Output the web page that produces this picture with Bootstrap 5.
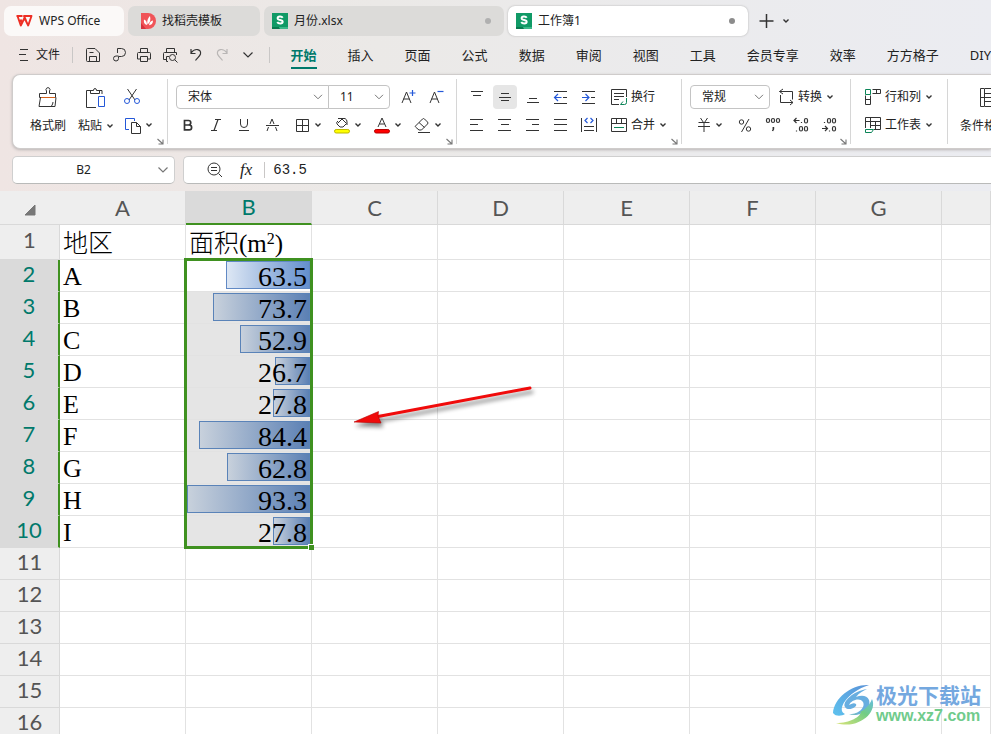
<!DOCTYPE html>
<html lang="zh-CN">
<head>
<meta charset="utf-8">
<meta name="viewport" content="width=device-width, initial-scale=1">
<title>工作簿1 - WPS Office</title>
<link rel="stylesheet" href="https://cdn.jsdelivr.net/npm/bootstrap@5.3.0/dist/css/bootstrap.min.css">
<style>
:root{--ui:"Noto Sans","Noto Sans CJK SC",sans-serif;--sel:#3f9120;--teal:#00796b}
body{font:12px/16px var(--ui);color:#222;background:linear-gradient(90deg,#efe5e3 0,#ebe9e7 38%,#ebebed 70%,#ebecf1 100%)}
button,select,input{font:inherit;color:inherit}
svg{flex:none;fill:none;stroke:#333;stroke-width:1;overflow:visible}
.doc-tabs{padding:6px 4px 0;gap:4px}
.doc-tab{height:30px;border:0;border-radius:7px;background:#dcdbd9;padding:0 12px;gap:8px;font-size:12px;white-space:nowrap}
.doc-tab .dot{width:6px;height:6px;border-radius:50%;background:#b0b0b0}
.tab-home{width:120px;background:#fbf9f8;gap:6px}
.tab-find{width:132px;gap:6px}
.tab-file{width:240px;padding:0 13px 0 8px;gap:6px}
.tab-on{background:#fff;box-shadow:0 0 2px #aaa}
.tab-on .dot{background:#8c8c8c}
.plain{border:0;background:none;padding:0;display:flex;align-items:center;justify-content:center;white-space:nowrap}
.menu-row{height:38px;padding-left:18px}
.qa{width:26px;height:28px}
.rule{width:1px;height:16px;background:#c9c7c6}
.rule-file{margin:0 7px 0 12px}
.menu-tabs{gap:31px;padding-left:21px}
.menu-tabs a{font-size:13px;line-height:18px;color:#222;text-decoration:none;white-space:nowrap;border-bottom:2px solid transparent;padding:4px 0 3px}
.menu-tabs a.on{color:var(--teal);font-weight:700;border-color:var(--teal)}
.ribbon{height:75px;margin-left:12px;background:#fff;border:1px solid #cfcccb;border-right:0;border-radius:8px 0 0 8px;box-shadow:0 1px 3px #b9b4b3;padding:4px 0}
.grp{position:relative;border-right:1px solid #d6d6d6;padding:4px 0 0;flex:none}
.g1{width:155px;padding-left:17px}.g2{width:289px}.g3{width:225px;padding-left:6px}.g4{width:169px}.g5{width:97px;padding-left:14px}.g6{padding-left:12px;border:0}
.g2 .marks{padding-left:6px}
.g2 .sq+.split{margin-left:2px}
.line{height:28px}
.sq{width:28px;height:28px}
.sq.on>span{background:#e6e6e6;border-radius:4px;width:24px;height:24px;display:grid;place-items:center}
.split{width:40px;height:28px;gap:4px}
.lab{height:28px;gap:4px;justify-content:flex-start}
.big{flex-direction:column;height:56px;justify-content:space-between;padding:4px 0 3px}
.big .cap{height:20px;display:flex;align-items:center;gap:4px}
.launch{position:absolute;right:3px;bottom:-1px;width:7px;height:7px}
.pick{appearance:none;height:24px;border:1px solid #c4c4c4;border-radius:4px;padding:0 20px 0 11px;font-size:12px;line-height:16px;background:#fff url("data:image/svg+xml,%3Csvg xmlns='http://www.w3.org/2000/svg' viewBox='0 0 10 6'%3E%3Cpath d='M1 .8 5 4.800 9 .8' fill='none' stroke='%23777'/%3E%3C/svg%3E") no-repeat right 5px center/10px 6px}
.p-font{width:153px;border-radius:4px 0 0 4px;margin-left:8px}
.p-size{width:62px;border-radius:0 4px 4px 0;margin-left:-1px}
.p-num{width:80px;margin-left:8px}
.formula{padding:7px 0 7px 12px;gap:8px}
.fbox{height:28px;background:#fff;border:1px solid #cfcfcf;border-bottom-color:#b9bab9;border-radius:5px}
.name-box{width:163px;padding:0 6px 0 0}
.name-box input{width:100%;min-width:0;border:0;text-align:center;padding:0 4px 0 0;outline:0;background:none}
.name-box svg{stroke:#777}
.edit-box{border-right:0;border-radius:5px 0 0 5px;padding-left:22px}
.edit-box input{border:0;outline:0;font:14px/20px "Liberation Mono",monospace;padding:0;margin-left:8px}
.edit-box .rule{margin-left:12px}
.fx{font:italic 17px/20px "Liberation Serif",serif}
.sheet{position:relative;background:#fff}
.cells{table-layout:fixed;width:100%;border-collapse:separate;border-spacing:0}
.cells th,.cells td{padding:0;border:0 solid #e2e2e2;border-width:0 1px 1px 0;height:32px;line-height:1;overflow:hidden}
.cells th{background:#eee;font:22px/24px Lato,sans-serif;color:#555;text-align:center;border-color:#d9d9d9}
.cells thead th{height:34px}
.cells thead th.on{background:#dadada;color:var(--teal);border-bottom:2px solid var(--sel)}
.cells .first>*{height:35px}
.cells tbody th{vertical-align:middle;padding-bottom:4px}
.cells tr.on th{background:#dadada;color:var(--teal);border-right:2px solid var(--sel);border-bottom-color:#dadada}
.cells td{font:28px/31px "Liberation Serif","Noto Sans CJK SC",serif;color:#000;padding-left:3px}
.cells .first td{font-size:25px;line-height:30px;font-weight:300;padding-top:4px}
.cells .first sup{font-size:16px;line-height:0}
.cells td.val{padding:0;background:#e5e5e5}
.cells td.val.act{background:#fff;position:relative;overflow:visible}
.stackd{display:grid;padding:0 1px;height:31px}
.stackd>*{grid-area:1/1}
.bar{justify-self:end;height:28px;margin-top:1px;border:1px solid #5a83b8;background:linear-gradient(90deg,#c8d1dc,#5b80b4)}
.act .bar{border-color:#6189c4;background:linear-gradient(90deg,#dde7f4,#648fcd)}
.num{justify-self:end;padding-right:3px;padding-top:1px}
.cells td.txt{font-size:26px;line-height:29px;padding-top:2px}
.marquee{position:absolute;left:-2px;top:-2px;width:129px;height:291px;border:3px solid var(--sel);pointer-events:none}
.marquee i{position:absolute;right:-4px;bottom:-4px;background:var(--sel);border:solid #fff;border-width:1px 0 0 1px;box-sizing:content-box;width:5px;height:5px}
.arrow{position:absolute;left:350px;top:189px;filter:drop-shadow(2px 4px 2px #0007)}
.mark-site{position:absolute;right:10px;bottom:6px;color:#74a8df}
.mark-site b{display:block;font:700 21px/24px "Noto Sans CJK SC",sans-serif}
.mark-site em{display:block;font:700 16px/20px "Liberation Sans",sans-serif;color:#70cb8c}
</style>
<script src="https://cdn.jsdelivr.net/npm/bootstrap@5.3.0/dist/js/bootstrap.bundle.min.js"></script>
</head>
<body class="vh-100 overflow-hidden d-flex flex-column">
<svg width="0" height="0" class="position-absolute" aria-hidden="true">
<symbol id="caret" viewBox="0 0 8 6"><path d="M1.500 1.500 4 4l2.500-2.500" stroke-width="1.400"/></symbol>
<symbol id="chev" viewBox="0 0 10 6"><path d="M.5.5 5 5 9.500.5" stroke-width="1.200"/></symbol>
<symbol id="corner" viewBox="0 0 7 7"><path d="M.5 1 6 6M6 1.500V6H1.500" stroke="#777" stroke-width="1.100"/></symbol>
<symbol id="ess" viewBox="0 0 16 16"><path d="M0 0h16v16H0z" fill="#109a66" stroke="none"/><path d="M0 14h7l1 2H0z" fill="#087a4e" stroke="none"/><path d="M7 14h9v2H8z" fill="#3cb889" stroke="none"/><path d="M10.700 4.700C9.800 3 5.600 3 5.600 5.200c0 2.500 5.100 1 5.100 3.500 0 2.400-4.500 2.200-5.400.3" stroke="#fff" stroke-width="1.900"/></symbol>
</svg>

<header>
<div class="doc-tabs d-flex">
<button class="doc-tab tab-home d-flex align-items-center"><svg width="17" height="12" viewBox="0 0 17 12"><path d="M.5 1h6M1.500 1l3.300 9.500L8.500 3l3.700 7.500L15.500 1H8l2.200 5M4.500 4.500 5.700 7" stroke="#ed2e24" stroke-width="1.900" stroke-linejoin="round"/></svg>WPS Office</button>
<button class="doc-tab tab-find d-flex align-items-center"><svg width="16" height="16" viewBox="0 0 16 16"><path d="M1 0h7a8 8 0 0 1 0 16H1z" fill="#f05458" stroke="none"/><path d="M1 10 6 16H1z" fill="#d6323c" stroke="none"/><path d="M7 12C3 11 4 7 4 6.500 6 7 7 9 7 12Zm.500-.5C6.500 7 9 4 10 3c1 4 0 7-2.500 8.500Zm1.500.7C9.500 9 11 8 13 7.500c0 3-1.500 4.500-4 4.700Z" fill="#fff" stroke="none"/></svg>找稻壳模板</button>
<button class="doc-tab tab-file d-flex align-items-center"><svg width="16" height="16"><use href="#ess"/></svg>月份.xlsx<span class="dot ms-auto"></span></button>
<button class="doc-tab tab-file tab-on d-flex align-items-center"><svg width="16" height="16"><use href="#ess"/></svg>工作簿1<span class="dot ms-auto"></span></button>
<button class="plain ms-2" aria-label="新建"><svg width="14" height="14"><path d="M6.500 0v14M-.5 7h14" stroke-width="1.500"/></svg></button>
<button class="plain ms-1" aria-label="更多"><svg width="8" height="6"><use href="#caret"/></svg></button>
</div>
<nav class="menu-row d-flex align-items-center">
<button class="plain"><svg width="10" height="12" class="me-2"><path d="M2 .5h8M1 5.500h7M2 11.500h8"/></svg>文件</button>
<span class="rule rule-file"></span>
<button class="plain qa" aria-label="保存"><svg width="16" height="16"><path d="M1.500 2.500q0-1 1-1h7.500l4.500 4.500v8.500h-12q-1 0-1-1zM4.500 14V9.500h7V14M4.500 5.500h4"/></svg></button>
<button class="plain qa" aria-label="输出"><svg width="16" height="16"><path d="M6.500 6V1.500h4a4 4 0 0 1 0 8h-3v2a2.500 2.500 0 1 1-2.500-2.500h2.500"/></svg></button>
<button class="plain qa" aria-label="打印"><svg width="16" height="16"><path d="M4.500 5V1.500h7V5M4.500 12h-3V6.500q0-1 1-1h11q1 0 1 1V12h-3M4.500 9.500h7v5h-7z"/></svg></button>
<button class="plain qa" aria-label="打印预览"><svg width="16" height="16"><path d="M4.500 5V1.500h8V5M4 12.500H1.500v-6q0-1 1-1h12V8M6 14.500H4.500v-5H7"/><circle cx="10.500" cy="10.500" r="3"/><path d="m12.700 12.700 2.800 2.800"/></svg></button>
<button class="plain qa" aria-label="撤销"><svg width="16" height="16"><path d="M3 2v4.500h4.500M3 6C7 .5 13.500 2 12.500 7c-.500 2-3 4-5 6.500" stroke-width="1.200"/></svg></button>
<button class="plain qa" aria-label="重做"><svg width="16" height="16"><path d="M13 2v4.500H8.500M13 6C9 .5 2.500 2 3.500 7c.500 2 3 4 5 6.500" stroke="#b9b6b5" stroke-width="1.200"/></svg></button>
<button class="plain qa" aria-label="自定义"><svg width="10" height="6"><use href="#chev"/></svg></button>
<span class="rule ms-2"></span>
<div class="menu-tabs d-flex"><a href="#" class="on">开始</a><a href="#">插入</a><a href="#">页面</a><a href="#">公式</a><a href="#">数据</a><a href="#">审阅</a><a href="#">视图</a><a href="#">工具</a><a href="#">会员专享</a><a href="#">效率</a><a href="#">方方格子</a><a href="#">DIY</a></div>
</nav>

<div class="ribbon d-flex">
<div class="grp g1 d-flex">
<button class="plain big"><svg width="22" height="22" viewBox="0 0 22 22"><path d="M9.500 6.500V4a2 2 0 1 1 3 0v2.500h6v4h-16v-4zM3.500 10.500l-1.500 9h16l1-9M14.500 19q1.500-2 1.500-4"/><path d="M4 10.500h14" stroke="#d2601a"/></svg><span class="cap">格式刷</span></button>
<button class="plain big ms-2 ps-1"><svg width="22" height="22" viewBox="0 0 22 22"><path d="M6 3.500H1.500v17H11M14 3.500h3V7M5.500 6.500v-3h3q0-2 1.500-2t1.500 2h3v3z"/><path d="M13.500 9.500h6v10h-6z" stroke="#2458d8"/></svg><span class="cap">粘贴<svg width="8" height="6"><use href="#caret"/></svg></span></button>
<div class="ms-1">
<button class="plain sq" aria-label="剪切"><svg width="16" height="16"><path d="m3.500 0 7.500 11M12.500 0 5 11"/><g stroke="#2458d8"><circle cx="3" cy="12" r="2.500"/><circle cx="13" cy="12" r="2.500"/></g></svg></button>
<button class="plain split" aria-label="复制"><svg width="17" height="17"><path d="M5 12.500H1.500v-11h9V4" stroke="#2458d8"/><path d="M7.500 5.500h5l4 4v7h-9zM12.500 5.500v4h4"/></svg><svg width="8" height="6"><use href="#caret"/></svg></button>
</div>
<svg class="launch"><use href="#corner"/></svg>
</div>

<div class="grp g2">
<div class="line d-flex align-items-center">
<select class="pick p-font" aria-label="字体"><option>宋体</option></select>
<select class="pick p-size" aria-label="字号"><option>11</option></select>
<button class="plain sq ms-1" aria-label="增大字号"><svg width="16" height="16"><path d="m2 14 4.500-11L11 14M3.500 10h6"/><path d="M12.500 1v6M9.500 4h6" stroke="#2458d8" stroke-width="1.200"/></svg></button>
<button class="plain sq" aria-label="减小字号"><svg width="16" height="16"><path d="m2 14 4.500-11L11 14M3.500 10h6"/><path d="M9.500 2.500h6" stroke="#2458d8" stroke-width="1.200"/></svg></button>
</div>
<div class="line marks d-flex">
<button class="plain sq" aria-label="加粗"><svg width="12" height="14"><path d="M2.500 2.500h4a2.200 2.200 0 0 1 0 4.500h-4zM2.500 7h4.700a2.400 2.400 0 0 1 0 4.800H2.500z" stroke-width="1.700"/></svg></button>
<button class="plain sq" aria-label="倾斜"><svg width="12" height="14"><path d="M5 1.500h6M1 12.500h6M8 1.500l-4 11" stroke-width="1.200"/></svg></button>
<button class="plain sq" aria-label="下划线"><svg width="12" height="14"><path d="M2.500 1v5a3.500 3.500 0 0 0 7 0V1M1 12.500h10"/></svg></button>
<button class="plain sq" aria-label="删除线"><svg width="14" height="14"><path d="m5 6 2-5 2 5M3.500 9 2 13M10.500 9l1.500 4M1 7.500h13"/></svg></button>
<button class="plain split" aria-label="边框"><svg width="16" height="16"><path d="M2.500 2.500h12v12h-12zM8.500 2.500v12M2.500 8.500h12"/></svg><svg width="8" height="6"><use href="#caret"/></svg></button>
<button class="plain split" aria-label="填充颜色"><svg width="16" height="16"><path d="M4 1.500h7a3.500 3.500 0 0 1 2 3.500v3M4 6l4-4 4.500 4.500L9 10H6L3 7q-1-2 1-3"/><rect x=".5" y="12.500" width="15" height="3.500" rx="1.700" fill="#ff0" stroke="#bdb800"/></svg><svg width="8" height="6"><use href="#caret"/></svg></button>
<button class="plain split" aria-label="字体颜色"><svg width="16" height="16"><path d="m4 10 4-9 4 9M5.500 7h5"/><rect x=".5" y="12.500" width="15" height="3.500" rx="1.700" fill="#f00" stroke="#b50000"/></svg><svg width="8" height="6"><use href="#caret"/></svg></button>
<button class="plain split" aria-label="清除"><svg width="16" height="16"><path d="m1.500 9 7-7q1-1 2 0l3 3q1 1 0 2l-6 6H5L1.500 10q-.500-.5 0-1ZM5 5.500l5.500 5M4 15.500h12"/></svg><svg width="8" height="6"><use href="#caret"/></svg></button>
</div>
<svg class="launch"><use href="#corner"/></svg>
</div>

<div class="grp g3">
<div class="line d-flex">
<button class="plain sq" aria-label="顶端对齐"><svg width="14" height="14"><path d="M1 1.500h12M3 5.500h8"/></svg></button>
<button class="plain sq on" aria-label="垂直居中"><span><svg width="14" height="14"><path d="M3 3.500h8M1 7.500h12M3 10.500h8"/></svg></span></button>
<button class="plain sq" aria-label="底端对齐"><svg width="14" height="14"><path d="M3 8.500h8M1 12.500h12"/></svg></button>
<button class="plain sq" aria-label="减少缩进"><svg width="14" height="14"><path d="M0 1.500h13M9 7.500h4M0 13.500h13"/><path d="M7.500 7.500H.5M4 4 .5 7.500 4 11" stroke="#2458d8" stroke-width="1.200"/></svg></button>
<button class="plain sq" aria-label="增加缩进"><svg width="14" height="14"><path d="M0 1.500h13M9 7.500h4M0 13.500h13"/><path d="M0 7.500h7M3.500 4 7 7.500 3.500 11" stroke="#2458d8" stroke-width="1.200"/></svg></button>
<button class="plain lab ms-2"><svg width="16" height="16"><path d="M8 15.500H.5V.5h15V8M3 4.500h10M3 7.500h10M3 10.500h5"/><path d="M15.500 9v4.500q0 2-2 2H9.500m2.500-3-2.500 3" stroke="#0c8558"/></svg>换行</button>
</div>
<div class="line d-flex">
<button class="plain sq" aria-label="左对齐"><svg width="14" height="14"><path d="M0 1.500h13M0 6.500h8M0 12.500h13"/></svg></button>
<button class="plain sq" aria-label="居中"><svg width="14" height="14"><path d="M0 1.500h13M3 6.500h8M0 12.500h13"/></svg></button>
<button class="plain sq" aria-label="右对齐"><svg width="14" height="14"><path d="M0 1.500h13M6 6.500h7M0 12.500h13"/></svg></button>
<button class="plain sq" aria-label="两端对齐"><svg width="14" height="14"><path d="M0 1.500h13M0 6.500h13M0 12.500h13"/></svg></button>
<button class="plain sq" aria-label="分散对齐"><svg width="16" height="16"><path d="M.5 1v14M15.500 1v14M3 9.500h10M3 13.500h10"/><path d="M6.500 1 4 3.500 6.500 6M9.500 1 12 3.500 9.500 6" stroke="#2458d8" stroke-width="1.200"/></svg></button>
<button class="plain lab ms-2"><svg width="16" height="16"><path d="M.5 1.500h15v13H.5zM.5 6.500h15M5.500 1.500v5M10.500 1.500v5"/><path d="M3 10.500h10" stroke="#0c8558"/></svg>合并<svg width="8" height="6"><use href="#caret"/></svg></button>
</div>
<svg class="launch"><use href="#corner"/></svg>
</div>

<div class="grp g4">
<div class="line d-flex align-items-center">
<select class="pick p-num" aria-label="数字格式"><option>常规</option></select>
<button class="plain lab ms-2"><svg width="16" height="16"><path d="M5 5 1.500 2.500 5 0M1.500 2.500h13v8M2.500 6v7.500H15M12 11l3 2.500L12 16"/></svg>转换<svg width="8" height="6"><use href="#caret"/></svg></button>
</div>
<div class="line d-flex ps-2">
<button class="plain split" aria-label="货币"><svg width="14" height="14"><path d="m3.500 0 3 4.500m4-4.500-3 4.500M1.500 4.500h11M1 8.500h12M7 4.500V14"/></svg><svg width="8" height="6"><use href="#caret"/></svg></button>
<button class="plain sq" aria-label="百分比"><svg width="14" height="14"><circle cx="4.500" cy="4" r="2.200"/><circle cx="11.500" cy="11" r="2.200"/><path d="M12 1 4.500 14"/></svg></button>
<button class="plain sq" aria-label="千位分隔"><svg width="16" height="16"><g stroke-width="1.200"><rect x="2.500" y="1.500" width="3" height="4" rx="1.500"/><rect x="7.500" y="1.500" width="3" height="4" rx="1.500"/><rect x="12.500" y="1.500" width="3" height="4" rx="1.500"/></g><path d="M9.500 10v2l-1 2M8.500 11h1.500" stroke-width="1.400"/></svg></button>
<button class="plain sq" aria-label="增加小数"><svg width="16" height="16"><g stroke-width="1.200"><path d="M7.500 3.500H2M4.500 1 2 3.500 4.500 6M9.500 5v1M4.500 13.500v1"/><rect x="12.500" y="1.500" width="3" height="4.500" rx="1.500"/><rect x="7.500" y="9.500" width="3" height="4.500" rx="1.500"/><rect x="12.500" y="9.500" width="3" height="4.500" rx="1.500"/></g></svg></button>
<button class="plain sq" aria-label="减少小数"><svg width="16" height="16"><g stroke-width="1.200"><path d="M2 11.500h5.500M5 9l2.500 2.500L5 14M4.500 5v1M9.500 13.500v1"/><rect x="7.500" y="1.500" width="3" height="4.500" rx="1.500"/><rect x="12.500" y="1.500" width="3" height="4.500" rx="1.500"/><rect x="12.500" y="9.500" width="3" height="4.500" rx="1.500"/></g></svg></button>
</div>
<svg class="launch"><use href="#corner"/></svg>
</div>

<div class="grp g5">
<button class="plain lab"><svg width="16" height="16"><path d="M7.500.5h8v4h-8M11.500.5v4M.5 6.500v9h5v-9M.5 10.500h5"/><path d="M.5.5h5v5h-5z" stroke="#0c8558"/></svg>行和列<svg width="8" height="6"><use href="#caret"/></svg></button>
<button class="plain lab"><svg width="16" height="16"><path d="M.5 11V.5h15v12H9M.5 4.500h15M5.500.5V11M5.500 8.500h10M10.500 4.500v8"/><path d="M.5 12.500h8l-2 3h-6z" stroke="#0c8558"/></svg>工作表<svg width="8" height="6"><use href="#caret"/></svg></button>
</div>
<div class="grp g6">
<button class="plain big"><svg width="20" height="20"><path d="M4 1.500H.5v18H4M4.500 1.500h14v18h-14zM.5 10.500h18M4.500 6.500h14M4.500 14.500h14"/></svg><span class="cap">条件格式<svg width="8" height="6"><use href="#caret"/></svg></span></button>
</div>
</div>

<div class="formula d-flex">
<div class="fbox name-box d-flex align-items-center"><input value="B2" aria-label="名称框"><svg width="10" height="6"><use href="#chev"/></svg></div>
<div class="fbox edit-box d-flex align-items-center flex-grow-1">
<button class="plain" aria-label="查找"><svg width="18" height="18"><circle cx="8" cy="8" r="6"/><path d="m12.500 12.500 3.500 3.500M5 6.500h6M5 9.500h6"/></svg></button>
<button class="plain fx ms-3" aria-label="插入函数">fx</button><span class="rule"></span>
<input class="flex-grow-1" value="63.5" aria-label="编辑栏"></div>
</div>
</header>

<main class="sheet flex-grow-1 overflow-hidden">
<table class="cells">
<colgroup><col width="60"><col width="126"><col width="126"><col width="126"><col width="126"><col width="126"><col width="126"><col width="126"><col></colgroup>
<thead><tr><th class="border-end-0"><svg width="10" height="10"><path d="M10 0v10H0z" fill="#777" stroke="#777" stroke-linejoin="round"/></svg></th><th>A</th><th class="on">B</th><th>C</th><th>D</th><th>E</th><th>F</th><th>G</th><th></th></tr></thead>
<tbody id="rows"></tbody>
</table>
<svg class="arrow" width="190" height="50"><path d="M180 8 28 36.500" stroke="#f00b0b" stroke-width="3" stroke-linecap="round"/><path d="M4 42 28.500 31.500 28 36l3 7z" fill="#f00b0b" stroke="#b00" stroke-width=".6"/></svg>
<div class="mark-site d-flex">
<svg width="44" height="46" viewBox="0 0 44 46"><defs><linearGradient id="ga" x1="0" y1="1" x2="1" y2="0"><stop stop-color="#5ec2ee"/><stop offset="1" stop-color="#5a92d8"/></linearGradient><linearGradient id="gb" x1="0" y1="1" x2="1" y2="0"><stop stop-color="#d9e478"/><stop offset=".6" stop-color="#73cd84"/><stop offset="1" stop-color="#66bde0"/></linearGradient></defs><path d="M37 3C20 2 2 16 1 31c3 4 9 3 12 1C4 28 15 10 37 3Z" fill="url(#ga)" stroke="none"/><path d="M35 7C21 9 10 20 13 25c3 5 13 0 11-3-2-2-5 0-7 1 2-5 11-8 14-3 3 6-6 13-14 12 10 4 23-5 20-14-2-5-8-5-13-3 3-4 7-6 11-8Z" fill="#68aee0" stroke="none"/><path d="M40 17c6 13-13 31-36 24 14 0 25-6 25-12-3 3-7 4-11 4 11-1 19-8 22-16Z" fill="url(#gb)" stroke="none"/></svg>
<div><b>极光下载站</b><em>www.xz7.com</em></div>
</div>
</main>
<script>
const data=[['A',63.5],['B',73.7],['C',52.9],['D',26.7],['E',27.8],['F',84.4],['G',62.8],['H',93.3],['I',27.8]];
const max=Math.max(...data.map(d=>d[1]));
const blank=n=>'<td></td>'.repeat(n);
let html='<tr class="first"><th>1</th><td>地区</td><td>面积(m<sup>2</sup>)</td>'+blank(6)+'</tr>';
data.forEach(([k,v],i)=>{
  html+=`<tr class="on"><th>${i+2}</th><td class="txt">${k}</td><td class="val${i?'':' act'}"><div class="stackd"><div class="bar" style="width:${(v/max*100).toFixed(1)}%"></div><span class="num">${v}</span></div>${i?'':'<div class="marquee"><i></i></div>'}</td>${blank(6)}</tr>`;
});
for(let r=11;r<=16;r++)html+=`<tr><th>${r}</th>${blank(8)}</tr>`;
document.getElementById('rows').innerHTML=html;
</script>
</body>
</html>
